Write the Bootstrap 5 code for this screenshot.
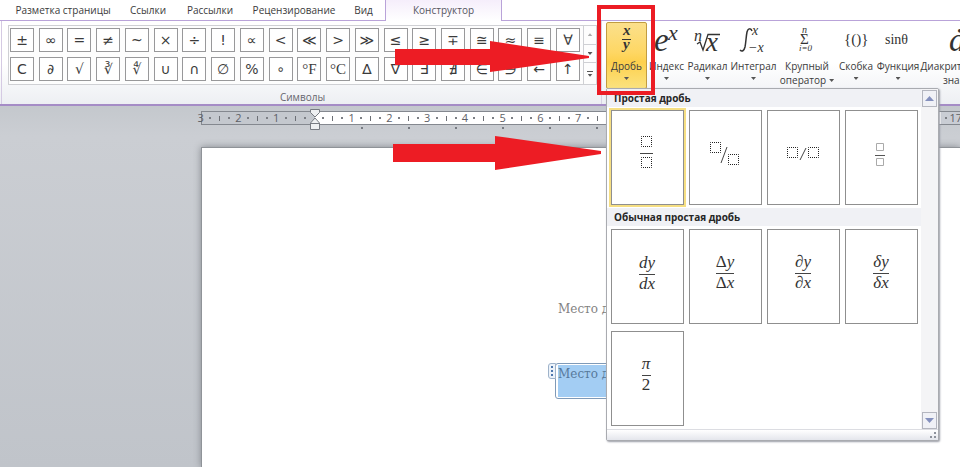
<!DOCTYPE html>
<html lang="ru">
<head>
<meta charset="utf-8">
<meta name="viewport" content="width=device-width, initial-scale=1">
<title>Конструктор формул</title>
<link href="https://cdn.jsdelivr.net/npm/bootstrap@5.3.0/dist/css/bootstrap.min.css" rel="stylesheet">
<style>
  body { font-family: "Open Sans", "Noto Sans", sans-serif; font-size: 10px; line-height: 14px; color: #3b3b3b; background: #fff; }
  button { font: inherit; color: inherit; padding: 0; border: 0; background: none; }
  .serif { font-family: "DejaVu Serif", serif; }
  .tab-strip { height: 21px; padding-left: 8px; border-bottom: 1px solid #b9a3d9; }
  .tab-strip a { color: #3b3b3b; text-decoration: none; padding: 3px 0 0; height: 21px; text-align: center; white-space: nowrap; }
  .tab-page { width: 110px; } .tab-refs { width: 60px; } .tab-mail { width: 64px; } .tab-review { width: 104px; } .tab-view { width: 35px; }
  .tab-strip .tab-current { width: 117px; margin-left: 4px; background: linear-gradient(#f5eefb, #fff); border: solid #b9a3d9; border-width: 0 1px; color: #55555f; }
  .ribbon { height: 85px; background: linear-gradient(#fff 0, #fff 50%, #edeff3 100%); border-bottom: 2px solid #a58cc6; }
  .symbol-group { width: 601px; padding: 4px 4px 0 6px; border-left: 1px solid #d5cae3; border-right: 1px solid #d8d2e4; margin-left: 1px; }
  .group-label { color: #66666e; padding-top: 5px; }
  .gallery { height: 60px; border: 1px solid #cfd0d4; background: #fdfdfd; }
  .symbol-grid { grid-template-columns: repeat(20, 24px); grid-auto-rows: 24px; row-gap: 5px; justify-content: space-between; padding: 2px 3px 0 1px; }
  .symbol-grid button { border: 1px solid #98989a; background: #fff; font-family: "DejaVu Sans", sans-serif; font-size: 14px; line-height: 20px; overflow: hidden; }
  .symbol-grid .tight { font-family: "Liberation Serif", serif; font-size: 15px; }
  .gallery-scroll { width: 13px; border-left: 1px solid #cfd0d4; }
  .gallery-scroll button + button { border-top: 1px solid #cfd0d4; }
  .caret { display: block; width: 5px; height: 3px; margin: 0 auto; background: #555; clip-path: polygon(0 0, 100% 0, 50% 100%); }
  .caret.up { clip-path: polygon(50% 0, 100% 100%, 0 100%); background: #aaa; }
  .more-bar { display: block; width: 6px; height: 1px; margin: 0 auto 2px; background: #555; }
  .tool { display: flex; flex-direction: column; align-items: center; height: 67px; margin-top: 1px; white-space: nowrap; text-align: center; border: 1px solid transparent; border-radius: 2px; flex: none; }
  .tool svg { display: block; width: 40px; height: 36px; flex: none; overflow: visible; }
  .tool text { font-family: "Liberation Serif", serif; font-style: italic; fill: #333; }
  .tool .upright, .tile .upright { font-style: normal; }
  .tool .caret { margin-top: 4px; }
  .tool .caret.d-inline-block { margin: 0 0 2px 3px; }
  .tool-wrap { width: 41px; }
  .tool-wrap .tool { width: 41px; background: linear-gradient(#fbe08c, #fed764 45%, #fdd04d 60%, #fbe27e); border-color: #c19c41; }
  .w-index { width: 39px; } .w-root { width: 43px; } .w-int { width: 49px; } .w-op { width: 58px; } .w-par { width: 40px; } .w-fn { width: 44px; } .w-acc { width: 82px; }
  .callout { left: -9px; top: -16px; width: 58px; height: 90px; border: 4px solid #ec1c24; z-index: 6; pointer-events: none; }
  .fraction-menu { left: 0; top: 67px; width: 333px; border: 1px solid #a9abb0; border-radius: 2px; background: #fff; box-shadow: 1px 1px 2px #9a9ca6; z-index: 5; }
  .menu-heading { font-size: 10px; line-height: 19px; font-weight: 700; color: #262626; background: #f0f1f5; padding-left: 7px; margin: 0; height: 18px; }
  .tile-grid { grid-template-columns: repeat(4, 73px); justify-content: space-between; row-gap: 7px; padding: 3px 3px 3px 4px; }
  .tile { height: 95px; border: 1px solid #8f8f8f; background: #fff; }
  .tile svg { display: block; width: 71px; height: 93px; }
  .tile text { font-family: "Liberation Serif", serif; font-style: italic; font-size: 17px; fill: #333; text-anchor: middle; }
  .tile.chosen { outline: 2px solid #f6df83; }
  .slots { fill: none; stroke: #222; stroke-dasharray: 1 1; stroke-dashoffset: .5; }
  .menu-scroll { width: 17px; background: #f4f4f6; padding-top: 1px; }
  .menu-scroll button { width: 15px; height: 17px; border: 1px solid #b4b6bf; background: #f0f1f6; margin: 0 1px; }
  .menu-scroll .caret { width: 9px; height: 5px; background: #8490bd; }
  .menu-grip { height: 11px; border-top: 1px solid #dcdde2; background: linear-gradient(#fff, #e4e6ec); }
  .menu-grip svg { display: block; width: 8px; height: 8px; margin: 1px 1px 0 auto; }
  .workspace { background: linear-gradient(#c4c8cd, #cbced3 30px, #c0c4ca); padding-top: 5px; }
  .ruler { margin-left: 196px; height: 14px; }
  .ruler-track { color: #5d6066; background:
      linear-gradient(#84888f, #84888f) 5px 0 / 100% 1px no-repeat,
      linear-gradient(#84888f, #84888f) 5px 100% / 100% 1px no-repeat,
      linear-gradient(#84888f, #84888f) 5px 0 / 1px 100% no-repeat,
      linear-gradient(90deg, transparent 5px, #c4c8ce 5px, #c4c8ce 119px, #fff 119px, #fff 745px, #c9cdd4 745px); }
  .ruler-track span { flex: 1 1 0; width: 0; display: flex; justify-content: center; line-height: 14px; font-size: 11px; }
  .tick { width: 1px; height: 5px; margin-top: 5px; background: #6c6f75; }
  .dot { width: 2px; height: 2px; margin-top: 6px; background: #7c7f85; }
  .indent { left: 114px; top: -2px; width: 10px; height: 21px; }
  .tab-stops { height: 2px; margin: 2px 0 0 361px; background: repeating-linear-gradient(90deg, #777b82 0, #777b82 2px, transparent 2px, transparent 47px); }
  .sheet { margin: 18px 0 0 201px; padding: 152px 0 0 356px; background: #fff; border: solid #8f9398; border-width: 1px 0 0 1px; box-shadow: 0 0 7px #85898e; font-size: 12px; line-height: 18px; color: #828282; white-space: nowrap; }
  .equation { margin: 45px 0 0 -3px; height: 36px; border: 1px solid #7f9ab8; border-radius: 3px; padding: 1px 0 1px 2px; width: 230px; color: #57799b; }
  .equation .filled { background: #a3cdf3; height: 32px; }
  .handle { left: -8px; top: -1px; width: 8px; height: 16px; border: 1px solid #9fb3ca; border-radius: 3px 0 0 3px; background: #edf3fa; }
  .handle svg { display: block; }
  .pointer { fill: #ed1c24; width: 211px; height: 36px; pointer-events: none; z-index: 7; }
  .pointer.first { left: 394px; top: 41px; width: 196px; height: 32px; }
  .pointer.second { left: 393px; top: 136px; }
</style>
<script src="https://cdn.jsdelivr.net/npm/bootstrap@5.3.0/dist/js/bootstrap.bundle.min.js"></script>
</head>
<body class="vh-100 overflow-hidden position-relative d-flex flex-column">
<nav class="tab-strip d-flex flex-shrink-0">
  <a href="#" class="tab-page">Разметка страницы</a>
  <a href="#" class="tab-refs">Ссылки</a>
  <a href="#" class="tab-mail">Рассылки</a>
  <a href="#" class="tab-review">Рецензирование</a>
  <a href="#" class="tab-view">Вид</a>
  <a href="#" class="tab-current" aria-current="page">Конструктор</a>
</nav>
<header class="ribbon d-flex flex-shrink-0">
  <section class="symbol-group flex-shrink-0 d-flex flex-column">
    <div class="gallery d-flex">
      <div id="symbols" class="symbol-grid d-grid flex-grow-1"></div>
      <div class="gallery-scroll d-flex flex-column">
        <button class="flex-fill" aria-label="Вверх"><span class="caret up"></span></button>
        <button class="flex-fill" aria-label="Вниз"><span class="caret"></span></button>
        <button class="flex-fill" aria-label="Ещё"><span class="more-bar"></span><span class="caret"></span></button>
      </div>
    </div>
    <div class="group-label text-center">Символы</div>
  </section>
  <section class="d-flex ps-1">
    <div class="tool-wrap position-relative">
      <button class="tool"><svg viewBox="0 0 40 36"><text x="16" y="12" font-size="15" font-weight="bold">x</text><path d="M15 16.500h9" stroke="#333"/><text x="16" y="26" font-size="15" font-weight="bold">y</text></svg><span>Дробь</span><span class="caret"></span></button>
      <div class="callout position-absolute"></div>
      <div class="fraction-menu position-absolute">
        <div class="d-flex">
          <div class="flex-grow-1">
            <h2 class="menu-heading">Простая дробь</h2>
            <div class="tile-grid d-grid">
              <button class="tile chosen" aria-label="Вертикальная дробь"><svg viewBox="0 0 71 93"><path class="slots" d="M29.500 25.500h10v10h-10zM29.500 46.500h10v10h-10z"/><path d="M28 42.500h13" stroke="#444"/></svg></button>
              <button class="tile" aria-label="Диагональная дробь"><svg viewBox="0 0 71 93"><path class="slots" d="M20.500 31.500h10v10h-10zM38.500 43.500h10v10h-10z"/><path d="M31 52l6-16" stroke="#444"/></svg></button>
              <button class="tile" aria-label="Горизонтальная дробь"><svg viewBox="0 0 71 93"><path class="slots" d="M19.500 36.500h10v10h-10zM40.500 36.500h10v10h-10z"/><path d="M32 49l6-12" stroke="#444"/></svg></button>
              <button class="tile" aria-label="Маленькая дробь"><svg viewBox="0 0 71 93"><path d="M30.500 32.500h7v7h-7zM30.500 47.500h7v7h-7z" fill="none" stroke="#aaa"/><path d="M29 44.500h10" stroke="#555"/></svg></button>
            </div>
            <h2 class="menu-heading">Обычная простая дробь</h2>
            <div class="tile-grid d-grid">
              <button class="tile"><svg viewBox="0 0 71 93"><text x="35" y="38">dy</text><path d="M27 44.500h16" stroke="#444"/><text x="35" y="59">dx</text></svg></button>
              <button class="tile"><svg viewBox="0 0 71 93"><text x="35" y="37"><tspan class="upright">Δ</tspan>y</text><path d="M26 43.500h18" stroke="#444"/><text x="35" y="58"><tspan class="upright">Δ</tspan>x</text></svg></button>
              <button class="tile"><svg viewBox="0 0 71 93"><text x="35" y="37">∂y</text><path d="M27 43.500h16" stroke="#444"/><text x="35" y="58">∂x</text></svg></button>
              <button class="tile"><svg viewBox="0 0 71 93"><text x="35" y="37">δy</text><path d="M27 43.500h16" stroke="#444"/><text x="35" y="58">δx</text></svg></button>
              <button class="tile"><svg viewBox="0 0 71 93"><text x="34" y="37">π</text><path d="M30 43.500h9" stroke="#444"/><text class="upright" x="34" y="58">2</text></svg></button>
            </div>
          </div>
          <div class="menu-scroll d-flex flex-column justify-content-between">
            <button aria-label="Прокрутить вверх"><span class="caret up"></span></button>
            <button aria-label="Прокрутить вниз"><span class="caret"></span></button>
          </div>
        </div>
        <div class="menu-grip"><svg viewBox="0 0 8 8" fill="#8e929c"><path d="M5 1h2v2H5zM5 5h2v2H5zM1 5h2v2H1z"/></svg></div>
      </div>
    </div>
    <button class="tool w-index"><svg viewBox="0 0 40 36"><text x="7" y="28" font-size="33">e</text><text x="21" y="17" font-size="22">x</text></svg><span>Индекс</span><span class="caret"></span></button>
    <button class="tool w-root"><svg viewBox="0 0 40 36"><text x="6" y="18" font-size="16">n</text><path d="M9 21l3-2 3 8 5-15.500h12" fill="none" stroke="#333" stroke-width="1.300"/><text x="18" y="28" font-size="27">x</text></svg><span>Радикал</span><span class="caret"></span></button>
    <button class="tool w-int"><svg viewBox="0 0 40 36"><path d="M18 8c-1-3-4-3-5 1-1 5-1 10-2 15-1 4-3 5-5 3" fill="none" stroke="#333" stroke-width="1.500"/><text x="18" y="12" font-size="14">x</text><text x="14" y="29" font-size="14">−x</text></svg><span>Интеграл</span><span class="caret"></span></button>
    <button class="tool w-op"><svg viewBox="0 0 40 36"><text x="15" y="10" font-size="10">n</text><text class="upright" x="13" y="21" font-size="15">Σ</text><text x="12" y="28" font-size="9">i=0</text></svg><span>Крупный<br>оператор<span class="caret d-inline-block"></span></span></button>
    <button class="tool w-par"><svg viewBox="0 0 40 36"><text class="upright" x="8" y="21" font-size="15">{()}</text></svg><span>Скобка</span><span class="caret"></span></button>
    <button class="tool w-fn"><svg viewBox="0 0 40 36"><text class="upright" x="7" y="21" font-size="14">sinθ</text></svg><span>Функция</span><span class="caret"></span></button>
    <button class="tool w-acc"><svg viewBox="0 0 40 36"><text x="8" y="28" font-size="33">ȧ</text></svg><span>Диакритические<br>знаки<span class="caret d-inline-block"></span></span></button>
  </section>
</header>
<main class="workspace flex-grow-1 d-flex flex-column">
  <div class="ruler position-relative">
    <div id="marks" class="ruler-track d-flex h-100"></div>
    <svg class="indent position-absolute" viewBox="0 0 10 21" fill="#eef0f2" stroke="#777b82"><path d="M.5.500h9v3L5 8 .5 3.500zM5 9l4.500 5v6.500h-9V14zM.5 14.500h9"/></svg>
  </div>
  <div class="tab-stops"></div>
  <article class="sheet serif flex-grow-1">
    <div>Место для уравнения.</div>
    <div class="equation position-relative"><div class="filled">Место для уравнения.</div>
      <div class="handle position-absolute"><svg viewBox="0 0 6 14" width="6" height="14" fill="#4f78ad"><path d="M2 2h2v2H2zM2 6h2v2H2zM2 10h2v2H2z"/></svg></div>
    </div>
  </article>
</main>
<svg class="pointer first position-absolute" viewBox="0 0 196 32"><path d="M1 8h95V0l99 15v2L96 31v-7H1z"/></svg>
<svg class="pointer second position-absolute" viewBox="0 0 211 36"><path d="M0 8h102V0l106 15v3L102 34v-8H0z"/></svg>
<script>
  const glyphs = ['±','∞','=','≠','~','×','÷','!','∝','<','≪','>','≫','≤','≥','∓','≅','≈','≡','∀',
                  'C','∂','√','∛','∜','∪','∩','∅','%','∘','°F','°C','∆','∇','∃','∄','∈','∋','←','↑'];
  const grid = document.getElementById('symbols');
  glyphs.forEach(g => {
    const b = document.createElement('button');
    b.textContent = g;
    if (g.length > 1) b.className = 'tight';
    grid.append(b);
  });
  const marks = document.getElementById('marks');
  for (let q = -12; q <= 68; q++) {
    const cell = document.createElement('span');
    if (q % 4 === 0) cell.textContent = q ? Math.abs(q / 4) : '';
    else { const m = document.createElement('i'); m.className = q % 2 ? 'dot' : 'tick'; cell.append(m); }
    marks.append(cell);
  }
</script>
</body>
</html>
